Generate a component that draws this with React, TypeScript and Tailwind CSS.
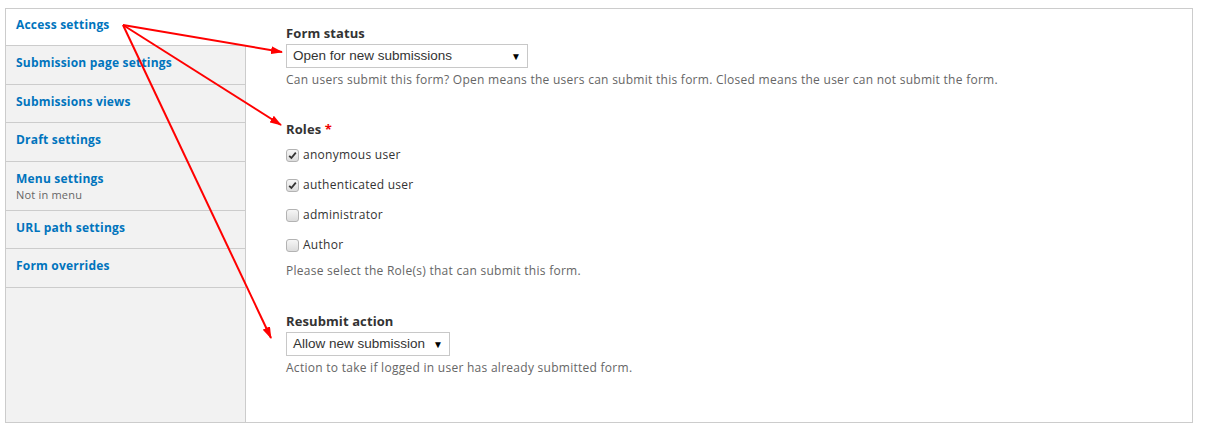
import React from "react";

const tabs = [
  { label: "Access settings", active: true },
  { label: "Submission page settings" },
  { label: "Submissions views" },
  { label: "Draft settings" },
  { label: "Menu settings", summary: "Not in menu" },
  { label: "URL path settings" },
  { label: "Form overrides" },
];

const roles = [
  { name: "anonymous user", checked: true },
  { name: "authenticated user", checked: true },
  { name: "administrator", checked: false },
  { name: "Author", checked: false },
];

function Checkbox({ checked }: { checked: boolean }) {
  return (
    <span className="w-[13px] h-[13px] rounded-[3px] border border-[#b3b3b3] bg-gradient-to-b from-[#f6f6f6] to-[#dcdcdc] flex items-center justify-center">
      {checked && (
        <svg width="9" height="9" viewBox="0 0 9 9">
          <path d="M1.2 4.8 L3.4 7 L7.8 1.6" fill="none" stroke="#333" strokeWidth="1.8" />
        </svg>
      )}
    </span>
  );
}

function Select({ value, width }: { value: string; width: string }) {
  return (
    <div
      className={`${width} h-[24px] border border-[#c8c8c8] bg-white flex items-center justify-between pl-[6px] pr-[6px] text-[13.5px] text-[#333] font-['Liberation_Sans',Arial,sans-serif]`}
    >
      <span>{value}</span>
      <span className="text-[10px] text-black">▼</span>
    </div>
  );
}

function Arrows() {
  return (
    <svg className="absolute inset-0 pointer-events-none" width="1211" height="429">
      <defs>
        <marker id="head" markerWidth="12" markerHeight="8" refX="11" refY="4" orient="auto" markerUnits="userSpaceOnUse">
          <path d="M0 0 L12 4 L0 8 Z" fill="#f00" />
        </marker>
      </defs>
      <line x1="123" y1="25" x2="282" y2="52" stroke="#f00" strokeWidth="2" markerEnd="url(#head)" />
      <line x1="123" y1="25" x2="281" y2="125" stroke="#f00" strokeWidth="2" markerEnd="url(#head)" />
      <line x1="123" y1="25" x2="271" y2="338" stroke="#f00" strokeWidth="2" markerEnd="url(#head)" />
    </svg>
  );
}

export default function App() {
  return (
    <div className="relative w-[1211px] h-[429px] bg-white font-['Open_Sans',sans-serif] pt-[8px] pl-[5px]">
      <div className="w-[1188px] h-[415px] border border-[#ccc] flex">
        {/* vertical tabs */}
        <div className="w-[240px] flex flex-col">
          {tabs.map((t) => (
            <div
              key={t.label}
              className={`border-b border-[#ccc] px-[10px] ${
                t.active ? "bg-white h-[37px] pt-[7px]" : "bg-[#f2f2f2] border-r pt-[8px]"
              } ${t.summary ? "h-[49px]" : t.active ? "" : "h-[38.5px]"}`}
            >
              <div className="text-[12px] font-bold text-[#0074bd] leading-[18px] tracking-[0.2px]">{t.label}</div>
              {t.summary && <div className="text-[11px] text-[#666] leading-[14px] tracking-[0.2px]">{t.summary}</div>}
            </div>
          ))}
          <div className="flex-1 bg-[#f2f2f2] border-r border-[#ccc]" />
        </div>

        {/* panel */}
        <div className="flex-1 pl-[40px] pt-[15px] text-[#333] tracking-[0.27px]">
          <div className="text-[13px] font-bold leading-[18px] tracking-[0.1px]">Form status</div>
          <div className="mt-[2px] tracking-normal">
            <Select value="Open for new submissions" width="w-[242px]" />
          </div>
          <div className="mt-[3px] text-[12px] text-[#666] leading-[18px]">
            Can users submit this form? Open means the users can submit this form. Closed means the user can not submit the form.
          </div>

          <div className="mt-[31px] text-[13px] font-bold leading-[18px] tracking-[0.1px]">
            Roles <span className="text-[#e00]">*</span>
          </div>
          <div className="mt-[2px] flex flex-col">
            {roles.map((r) => (
              <label key={r.name} className="h-[30px] flex items-center gap-[4px] text-[12px] text-[#333]">
                <Checkbox checked={r.checked} />
                <span>{r.name}</span>
              </label>
            ))}
          </div>
          <div className="mt-[2px] text-[12px] text-[#666] leading-[18px]">
            Please select the Role(s) that can submit this form.
          </div>

          <div className="mt-[32px] text-[13px] font-bold leading-[18px] tracking-[0.1px]">Resubmit action</div>
          <div className="mt-[2px] tracking-normal">
            <Select value="Allow new submission" width="w-[164px]" />
          </div>
          <div className="mt-[3px] text-[12px] text-[#666] leading-[18px]">
            Action to take if logged in user has already submitted form.
          </div>
        </div>
      </div>
      <Arrows />
    </div>
  );
}
